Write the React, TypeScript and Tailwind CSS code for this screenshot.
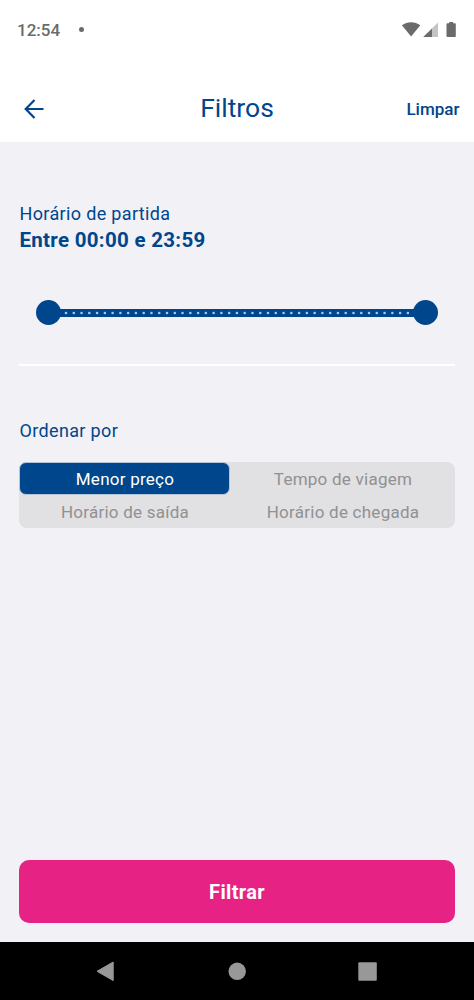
import { useState } from 'react'

const OPTIONS = ['Menor preço', 'Tempo de viagem', 'Horário de saída', 'Horário de chegada']
const TICKS = Array.from({ length: 45 }, (_, i) => i)

function StatusBar() {
  return (
    <div className="flex h-[60px] items-center justify-between px-[17px] text-[#6b6b6b]">
      <div className="flex items-center">
        <span className="text-[17px] font-medium leading-5">12:54</span>
        <span className="ml-[19px] mb-[2px] size-[5px] rounded-full bg-[#6b6b6b]" />
      </div>
      <svg width="56" height="18" viewBox="0 0 56 18" fill="currentColor">
        <path d="M.9 4.2C6.4.1 13.8.1 19.3 4.2L10.1 15.4z" />
        <path d="M37 1.5V16H22.3z" opacity=".4" />
        <path d="M31 7.4V16h-8.7z" />
        <path d="M48.2 1h3.9v1.3h1.6c.7 0 1.1.4 1.1 1.1v11.5c0 .7-.4 1.1-1.1 1.1h-7.1c-.7 0-1.1-.4-1.1-1.1V3.4c0-.7.4-1.1 1.1-1.1h1.6z" />
      </svg>
    </div>
  )
}

function Header({ onClear }: { onClear: () => void }) {
  return (
    <header className="grid h-[82px] grid-cols-[1fr_auto_1fr] items-center px-[14px] pt-4 text-[#00468c]">
      <button aria-label="Voltar" className="ml-[10px] w-5">
        <svg width="20" height="20" viewBox="0 0 20 20" fill="none" stroke="currentColor" strokeWidth="2.2">
          <path d="M19.5 10H2M10.5 1 1.7 10l8.8 9" />
        </svg>
      </button>
      <h1 className="pb-[3px] text-[26.5px] leading-8">Filtros</h1>
      <button className="mr-[0.5px] justify-self-end text-[17px] font-medium leading-5" onClick={onClear}>
        Limpar
      </button>
    </header>
  )
}

function TimeSlider() {
  return (
    <div className="mx-[17px] flex items-center">
      <span className="size-[25px] shrink-0 rounded-full bg-[#00468c]" />
      <div className="-mx-px h-[8px] flex-1 bg-[#00468c]">
        <svg width="354" height="8" viewBox="0 0 354 8" fill="#a9c6e8">
          {TICKS.map(i => (
            <circle key={i} cx={6 + i * 7.77} cy="4" r="1.3" />
          ))}
        </svg>
      </div>
      <span className="size-[25px] shrink-0 rounded-full bg-[#00468c]" />
    </div>
  )
}

function NavBar() {
  return (
    <nav className="h-[58px] bg-black">
      <svg width="474" height="58" viewBox="0 0 474 58" fill="#999799">
        <path d="M113.2 20v18.6L97 29.3z" stroke="#999799" strokeWidth="1" strokeLinejoin="round" />
        <circle cx="237.2" cy="29.3" r="8.7" />
        <rect x="358.3" y="20.2" width="18.5" height="18.5" rx="1" />
      </svg>
    </nav>
  )
}

export default function App() {
  const [selected, setSelected] = useState(OPTIONS[0])

  return (
    <div className="flex h-[1000px] w-[474px] flex-col bg-white font-[Roboto,sans-serif]">
      <StatusBar />
      <Header onClear={() => setSelected(OPTIONS[0])} />

      <main className="flex flex-1 flex-col bg-[#f1f1f6] px-[19px] pb-[19px] pt-[60px]">
        <section className="border-b-2 border-white pb-[39px] text-[#00468c]">
          <p className="pl-[0.5px] text-[18px] leading-6 tracking-[0.35px]">Horário de partida</p>
          <p className="mb-[45px] pl-[0.5px] text-[20.5px] font-bold leading-[29px] tracking-[0.3px]">
            Entre 00:00 e 23:59
          </p>
          <TimeSlider />
        </section>

        <section className="pt-[53px]">
          <h2 className="pl-[0.5px] text-[18px] leading-6 tracking-[0.35px] text-[#00468c]">Ordenar por</h2>
          <div className="mt-[19px] grid grid-cols-[211px_1fr] rounded-lg bg-[#e1e0e2]">
            {OPTIONS.map(o => (
              <button
                key={o}
                onClick={() => setSelected(o)}
                className={`h-[33px] rounded-[7px] pl-px text-[17px] leading-5 tracking-[0.25px] ${
                  selected === o ? 'border border-[#b5c6da] bg-[#00468c] text-white' : 'text-[#909193]'
                }`}
              >
                {o}
              </button>
            ))}
          </div>
        </section>

        <button className="mt-auto h-[63px] rounded-[10px] bg-[#e62385] text-[20px] font-bold tracking-[0.35px] text-white">
          Filtrar
        </button>
      </main>

      <NavBar />
    </div>
  )
}
